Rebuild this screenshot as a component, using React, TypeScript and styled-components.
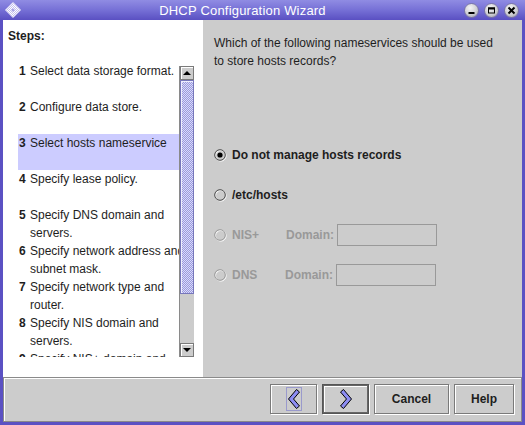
import React from 'react';
import styled, { createGlobalStyle } from 'styled-components';

const GlobalStyle = createGlobalStyle`
  html, body {
    margin: 0;
    padding: 0;
  }
  body {
    font-family: "Liberation Sans", Arial, sans-serif;
    font-size: 12px;
    background: #5b51c3;
  }
`;

const Window = styled.div`
  width: 525px;
  height: 425px;
  display: flex;
  flex-direction: column;
  background: #5b51c3;
`;

const TitleBar = styled.div`
  height: 20px;
  display: flex;
  align-items: center;
  padding: 0 6px 0 5px;
  background: linear-gradient(#908ce3, #7670d6 50%, #5a50c2);
  color: #fff;
`;

const AppIcon = styled.div`
  width: 16px;
  height: 16px;
  display: flex;
`;

const TitleText = styled.div`
  flex: 1;
  text-align: center;
  font-size: 13px;
  letter-spacing: 0.2px;
  padding-top: 1px;
`;

const TitleButtons = styled.div`
  display: flex;
  gap: 5px;
`;

const TitleButton = styled.div`
  width: 15px;
  height: 15px;
  box-sizing: border-box;
  border-radius: 50%;
  border: 1px solid #7a76a8;
  background: radial-gradient(circle at 40% 30%, #f4f4f4, #cfcfd4 55%, #9a9aa4);
  display: flex;
  align-items: center;
  justify-content: center;
`;

const Frame = styled.div`
  flex: 1;
  margin: 0 3px 3px;
  display: flex;
  flex-direction: column;
`;

const Main = styled.div`
  height: 357px;
  display: flex;
`;

const StepsPane = styled.div`
  width: 200px;
  background: #fff;
  padding-top: 9px;
  box-sizing: border-box;
  color: #1e1e1e;
`;

const StepsTitle = styled.div`
  font-weight: bold;
  line-height: 14px;
  padding-left: 5px;
`;

const StepsBody = styled.div`
  display: flex;
  margin-top: 19px;
  padding-left: 15px;
  height: 295px;
`;

const StepList = styled.div`
  width: 161px;
  overflow: hidden;
`;

const StepItem = styled.div<{ $selected?: boolean }>`
  height: 36px;
  display: flex;
  padding-left: 1px;
  background: ${(p) => (p.$selected ? '#ccccff' : 'transparent')};
`;

const StepNum = styled.span`
  width: 11px;
  flex: none;
  font-weight: bold;
  line-height: 18px;
`;

const StepLines = styled.div`
  display: flex;
  flex-direction: column;
  white-space: nowrap;
  line-height: 18px;
`;

const ScrollBar = styled.div`
  width: 15px;
  height: 291px;
  margin-top: 4px;
  box-sizing: border-box;
  display: flex;
  flex-direction: column;
  background: #cccccc;
  border-left: 1px solid #8a8a8a;
`;

const ArrowButton = styled.div<{ $down?: boolean }>`
  height: 14px;
  box-sizing: border-box;
  border: 1px solid #7a7a7a;
  box-shadow: inset 1px 1px 0 #fff;
  background: #cccccc;
  display: flex;
  align-items: center;
  justify-content: center;

  &::after {
    content: '';
    width: 0;
    height: 0;
    border-left: 4px solid transparent;
    border-right: 4px solid transparent;
    ${(p) => (p.$down ? 'border-top: 4px solid #000;' : 'border-bottom: 4px solid #000;')}
  }
`;

const Thumb = styled.div`
  height: 214px;
  box-sizing: border-box;
  border: 1px solid #7777bb;
  box-shadow: inset 1px 1px 0 #eeeeff;
  background-color: #ccccff;
  background-image: repeating-conic-gradient(#9c9cd8 0 25%, #d8d8ff 0 50%);
  background-size: 2px 2px;
`;

const TrackRest = styled.div`
  flex: 1;
`;

const ContentPane = styled.div`
  flex: 1;
  background: #cccccc;
  padding: 14px 11px 0;
  color: #1e1e1e;
`;

const Question = styled.div`
  line-height: 18px;
`;

const Options = styled.div`
  margin-top: 74px;
  display: flex;
  flex-direction: column;
  gap: 18px;
`;

const OptionRow = styled.div`
  height: 22px;
  display: flex;
  align-items: center;
`;

const RadioLabel = styled.label<{ $disabled?: boolean; $width?: number }>`
  display: flex;
  align-items: center;
  gap: 5px;
  font-weight: bold;
  color: ${(p) => (p.$disabled ? '#999999' : '#1e1e1e')};
  width: ${(p) => (p.$width ? `${p.$width}px` : 'auto')};
`;

const FieldLabel = styled.span`
  width: 51px;
  font-weight: bold;
  color: #999999;
`;

const TextBox = styled.div`
  width: 100px;
  height: 22px;
  box-sizing: border-box;
  border: 1px solid #999999;
  background: #cccccc;
`;

const ButtonBar = styled.div`
  flex: 1;
  box-sizing: border-box;
  border: 1px solid #8a8a8a;
  box-shadow: inset 1px 1px 0 #fff;
  background: #cccccc;
  display: flex;
  justify-content: flex-end;
  align-items: flex-start;
  padding: 6px 7px 0 0;
  gap: 5px;
`;

const Button = styled.button<{ $width: number; $default?: boolean }>`
  width: ${(p) => p.$width}px;
  height: 30px;
  box-sizing: border-box;
  padding: 0;
  margin: 0;
  background: #cccccc;
  font-family: "Liberation Sans", Arial, sans-serif;
  font-size: 12px;
  font-weight: bold;
  color: #1e1e1e;
  border: 1px solid ${(p) => (p.$default ? '#555555' : '#7a7a7a')};
  box-shadow: ${(p) =>
    p.$default
      ? 'inset 0 0 0 1px #666666, inset 2px 2px 0 #fff, 1px 1px 0 #fff'
      : 'inset 1px 1px 0 #fff, 1px 1px 0 #fff'};
  display: flex;
  align-items: center;
  justify-content: center;
`;

const FocusRing = styled.span`
  display: flex;
  padding: 1px 1px;
  border: 1px solid #9a9acc;
`;

const steps = [
  ['Select data storage format.'],
  ['Configure data store.'],
  ['Select hosts nameservice'],
  ['Specify lease policy.'],
  ['Specify DNS domain and', 'servers.'],
  ['Specify network address and', 'subnet mask.'],
  ['Specify network type and', 'router.'],
  ['Specify NIS domain and', 'servers.'],
  ['Specify NIS+ domain and', 'servers.'],
];

const Radio: React.FC<{ checked?: boolean; disabled?: boolean }> = ({ checked, disabled }) => (
  <svg width="13" height="13" viewBox="0 0 13 13">
    <circle cx="6.8" cy="6.8" r="5.3" fill="none" stroke="#ffffff" />
    <circle cx="6" cy="6" r="5.3" fill="none" stroke={disabled ? '#999999' : '#4a4a4a'} />
    {checked && <circle cx="6" cy="6" r="2.6" fill="#000" />}
  </svg>
);

const Chevron: React.FC<{ dir: 'left' | 'right' }> = ({ dir }) => (
  <svg width="12" height="20" viewBox="0 0 12 20">
    <polygon
      points={
        dir === 'left'
          ? '8.5,0.5 11.5,3 5.5,10 11.5,17 8.5,19.5 0.5,10'
          : '3.5,0.5 11.5,10 3.5,19.5 0.5,17 6.5,10 0.5,3'
      }
      fill="#8c8cf2"
      stroke="#000"
    />
  </svg>
);

const DiamondIcon = () => (
  <svg width="16" height="16" viewBox="0 0 16 16">
    <defs>
      <pattern id="chk" width="2" height="2" patternUnits="userSpaceOnUse">
        <rect width="2" height="2" fill="#c4c0ee" />
        <rect width="1" height="1" fill="#ffffff" />
        <rect x="1" y="1" width="1" height="1" fill="#ffffff" />
      </pattern>
    </defs>
    <polygon points="8,0.5 15.5,8 8,15.5 0.5,8" fill="url(#chk)" stroke="#e8e6fa" />
    <circle cx="8" cy="8" r="1.5" fill="#a9a4e4" />
  </svg>
);

export default function App() {
  return (
    <>
      <GlobalStyle />
      <Window>
        <TitleBar>
          <AppIcon>
            <DiamondIcon />
          </AppIcon>
          <TitleText>DHCP Configuration Wizard</TitleText>
          <TitleButtons>
            <TitleButton>
              <svg width="9" height="9" viewBox="0 0 9 9">
                <rect x="1.5" y="6" width="6" height="2" fill="#000" />
              </svg>
            </TitleButton>
            <TitleButton>
              <svg width="9" height="9" viewBox="0 0 9 9">
                <rect x="1.5" y="2" width="6" height="5" fill="none" stroke="#000" />
                <rect x="1" y="1.5" width="7" height="2" fill="#000" />
              </svg>
            </TitleButton>
            <TitleButton>
              <svg width="9" height="9" viewBox="0 0 9 9">
                <path d="M1.5 1.5 L7.5 7.5 M7.5 1.5 L1.5 7.5" stroke="#000" strokeWidth="2" />
              </svg>
            </TitleButton>
          </TitleButtons>
        </TitleBar>

        <Frame>
          <Main>
            <StepsPane>
              <StepsTitle>Steps:</StepsTitle>
              <StepsBody>
                <StepList>
                  {steps.map((lines, i) => (
                    <StepItem key={i} $selected={i === 2}>
                      <StepNum>{i + 1}</StepNum>
                      <StepLines>
                        {lines.map((l) => (
                          <span key={l}>{l}</span>
                        ))}
                      </StepLines>
                    </StepItem>
                  ))}
                </StepList>
                <ScrollBar>
                  <ArrowButton />
                  <Thumb />
                  <TrackRest />
                  <ArrowButton $down />
                </ScrollBar>
              </StepsBody>
            </StepsPane>

            <ContentPane>
              <Question>
                Which of the following nameservices should be used
                <br />
                to store hosts records?
              </Question>
              <Options>
                <OptionRow>
                  <RadioLabel>
                    <Radio checked />
                    Do not manage hosts records
                  </RadioLabel>
                </OptionRow>
                <OptionRow>
                  <RadioLabel>
                    <Radio />
                    /etc/hosts
                  </RadioLabel>
                </OptionRow>
                <OptionRow>
                  <RadioLabel $disabled $width={72}>
                    <Radio disabled />
                    NIS+
                  </RadioLabel>
                  <FieldLabel>Domain:</FieldLabel>
                  <TextBox />
                </OptionRow>
                <OptionRow>
                  <RadioLabel $disabled $width={71}>
                    <Radio disabled />
                    DNS
                  </RadioLabel>
                  <FieldLabel>Domain:</FieldLabel>
                  <TextBox />
                </OptionRow>
              </Options>
            </ContentPane>
          </Main>

          <ButtonBar>
            <Button $width={47}>
              <FocusRing>
                <Chevron dir="left" />
              </FocusRing>
            </Button>
            <Button $width={47} $default>
              <Chevron dir="right" />
            </Button>
            <Button $width={75}>Cancel</Button>
            <Button $width={60}>Help</Button>
          </ButtonBar>
        </Frame>
      </Window>
    </>
  );
}
